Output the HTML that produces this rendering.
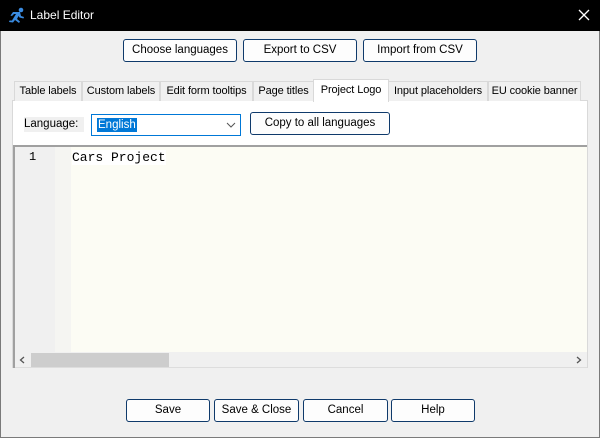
<!DOCTYPE html>
<html><head><style>
*{box-sizing:border-box;margin:0;padding:0}
body{width:600px;height:438px;background:#f0f0f0;font-family:"Liberation Sans",sans-serif;font-size:11.5px;color:#000;position:relative;overflow:hidden;white-space:nowrap}
.win{position:absolute;left:0;top:0;width:600px;height:438px;border:1px solid #7a7a7a;}
.title{position:absolute;left:0;top:0;width:600px;height:31px;background:#000;color:#fff;font-size:12px}
.title span{position:absolute;left:30px;top:8px}
.btn{position:absolute;height:23px;border:1px solid #0f3a6b;border-radius:3px;background:#fdfdfd;text-align:center;line-height:21px;font-size:11.5px}
.tab{position:absolute;top:81px;height:20px;border:1px solid #d9d9d9;border-bottom:none;background:#f0f0f0;text-align:center;line-height:19px;font-size:11px;overflow:hidden;letter-spacing:-0.1px}
.abs{position:absolute}
</style></head><body>
<div class="win"></div>
<div class="title">
<svg class="abs" style="left:8px;top:7px" width="18" height="17" viewBox="0 0 18 17"><g fill="#3a8be0"><circle cx="13" cy="3" r="2.3"/><path d="M5 5 L12 5 L13 9 L16 10 L15.5 11.5 L11.5 10.5 L10.5 9 L9 12 L12 14.5 L11 16 L7 13 L5 15.5 L1 15 L1.5 13.5 L4 13.5 L8 7 L6 7 L4 9 L2.5 8.5Z"/></g></svg>
<span>Label Editor</span>
<svg class="abs" style="left:578px;top:9px" width="12" height="12" viewBox="0 0 12 12"><path d="M1 1L11 11M11 1L1 11" stroke="#fff" stroke-width="1.3"/></svg>
</div>
<div class="btn" style="left:123px;top:39px;width:114px">Choose languages</div>
<div class="btn" style="left:243px;top:39px;width:114px">Export to CSV</div>
<div class="btn" style="left:363px;top:39px;width:114px">Import from CSV</div>

<div class="abs" style="left:12px;top:100px;width:576px;height:268px;background:#fff;border:1px solid #d9d9d9"></div>
<div class="tab" style="left:14px;width:68px">Table labels</div>
<div class="tab" style="left:82px;width:78px">Custom labels</div>
<div class="tab" style="left:160px;width:93px">Edit form tooltips</div>
<div class="tab" style="left:253px;width:61px">Page titles</div>
<div class="tab" style="left:488px;width:93px">EU cookie banner</div>
<div class="tab" style="left:388px;width:100px">Input placeholders</div>
<div class="tab" style="left:313px;top:79px;height:23px;width:76px;background:#fff;line-height:21px">Project Logo</div>

<div class="abs" style="left:24px;top:117px;width:60px;height:15px;background:#f0f0f0;line-height:15px">Language:</div>
<div class="abs" style="left:91px;top:114px;width:150px;height:22px;border:1px solid #0078d7;background:#fff">
<span class="abs" style="left:5px;top:3px;background:#0078d7;color:#fff;padding:0 1px;line-height:14px">English</span>
<svg class="abs" style="left:134px;top:7px" width="10" height="6" viewBox="0 0 10 6"><path d="M1 1L5 5L9 1" stroke="#555" fill="none"/></svg>
</div>
<div class="btn" style="left:250px;top:112px;width:140px">Copy to all languages</div>

<div class="abs" style="left:13px;top:145px;width:574px;height:223px;border-top:2px solid #a0a0a0;border-left:2px solid #a0a0a0;background:#fcfcf4;overflow:hidden">
<div class="abs" style="left:0;top:0;width:40px;height:205px;background:#f0f0f0"></div>
<div class="abs" style="left:40px;top:0;width:16px;height:205px;background:#f5f5f2"></div>
<div class="abs" style="left:14px;top:3px;font-family:'Liberation Mono',monospace;font-size:12px">1</div>
<div class="abs" style="left:57px;top:3px;font-family:'Liberation Mono',monospace;font-size:13px;background:#fff;line-height:15px">Cars Project</div>
<div class="abs" style="left:0;top:205px;width:574px;height:16px;background:#f0f0f0;border-bottom:1px solid #ddd">
<div class="abs" style="left:16px;top:1px;width:138px;height:14px;background:#cdcdcd"></div>
<svg class="abs" style="left:4px;top:4px" width="6" height="8"><path d="M5 1L1.5 4L5 7" stroke="#555" fill="none" stroke-width="1.3"/></svg>
<svg class="abs" style="left:561px;top:4px" width="6" height="8"><path d="M1 1L4.5 4L1 7" stroke="#555" fill="none" stroke-width="1.3"/></svg>
</div>
</div>

<div class="btn" style="left:126px;top:399px;width:84px">Save</div>
<div class="btn" style="left:214px;top:399px;width:85px">Save &amp; Close</div>
<div class="btn" style="left:303px;top:399px;width:85px">Cancel</div>
<div class="btn" style="left:391px;top:399px;width:84px">Help</div>
</body></html>
